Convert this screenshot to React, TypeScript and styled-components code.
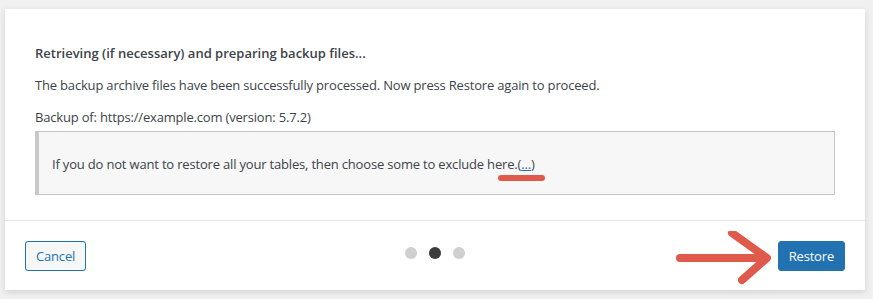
import styled, { createGlobalStyle } from "styled-components";

const GlobalStyle = createGlobalStyle`
  html, body {
    margin: 0;
    background: #f0f0f1;
  }
  body {
    font-family: "Open Sans", "Noto Sans", sans-serif;
    font-size: 13px;
    color: #3c434a;
    letter-spacing: -0.18px;
  }
`;

const Page = styled.div`
  padding: 9px 8px 10px 5px;
`;

const Card = styled.div`
  width: 860px;
  background: #fff;
  box-shadow: 0 2px 6px rgba(0, 0, 0, 0.13);
`;

const Body = styled.div`
  padding: 22px 30px 25px;
`;

const Paragraph = styled.p<{ $strong?: boolean }>`
  margin: 13px 0;
  line-height: 19px;
  font-weight: ${(p) => (p.$strong ? 600 : 400)};
  letter-spacing: ${(p) => (p.$strong ? "0" : "-0.18px")};

  &:last-of-type {
    margin-bottom: 4px;
  }
`;

const Notice = styled.div`
  position: relative;
  padding: 23px 13px 20px;
  background: #f7f7f7;
  border: 1px solid #c3c4c7;
  border-left: 4px solid #c8c8c8;
  line-height: 19px;
`;

const MoreLink = styled.a`
  color: #2271b1;
  text-decoration: underline;
`;

const Underline = styled.span`
  position: absolute;
  left: 459px;
  top: 43px;
  width: 47px;
  height: 6px;
  border-radius: 3px;
  background: #df5a4b;
`;

const Footer = styled.div`
  position: relative;
  display: grid;
  grid-template-columns: 1fr auto 1fr;
  align-items: center;
  padding: 20px 20px 19px;
  border-top: 1px solid #e6e6e6;
`;

const Button = styled.button<{ $primary?: boolean }>`
  box-sizing: border-box;
  justify-self: ${(p) => (p.$primary ? "end" : "start")};
  height: 30px;
  padding: 0 10px;
  font-family: inherit;
  font-size: 13px;
  letter-spacing: -0.18px;
  line-height: 28px;
  border-radius: 3px;
  border: 1px solid #2271b1;
  background: ${(p) => (p.$primary ? "#2271b1" : "#f6f7f7")};
  color: ${(p) => (p.$primary ? "#fff" : "#2271b1")};
  cursor: pointer;
`;

const Dots = styled.div`
  display: flex;
  gap: 12px;
  margin-top: -7px;
`;

const Dot = styled.span<{ $active?: boolean }>`
  width: 12px;
  height: 12px;
  border-radius: 50%;
  background: ${(p) => (p.$active ? "#3c3c3c" : "#d0d0d0")};
`;

const Arrow = styled.svg`
  position: absolute;
  left: 665px;
  top: 10px;
`;

export default function App() {
  return (
    <>
      <GlobalStyle />
      <Page>
        <Card>
          <Body>
            <Paragraph $strong>Retrieving (if necessary) and preparing backup files...</Paragraph>
            <Paragraph>
              The backup archive files have been successfully processed. Now press Restore again to proceed.
            </Paragraph>
            <Paragraph>Backup of: https://example.com (version: 5.7.2)</Paragraph>
            <Notice>
              If you do not want to restore all your tables, then choose some to exclude here.(
              <MoreLink href="#">...</MoreLink>)
              <Underline />
            </Notice>
          </Body>
          <Footer>
            <Button>Cancel</Button>
            <Dots>
              <Dot />
              <Dot $active />
              <Dot />
            </Dots>
            <Button $primary>Restore</Button>
            <Arrow width="110" height="60" viewBox="0 0 110 60">
              <g fill="none" stroke="#df5a4b" strokeWidth="8" strokeLinecap="round" strokeLinejoin="round">
                <path d="M10 27 H96" />
                <path d="M62 2 L97 27 L72 49" />
              </g>
            </Arrow>
          </Footer>
        </Card>
      </Page>
    </>
  );
}
